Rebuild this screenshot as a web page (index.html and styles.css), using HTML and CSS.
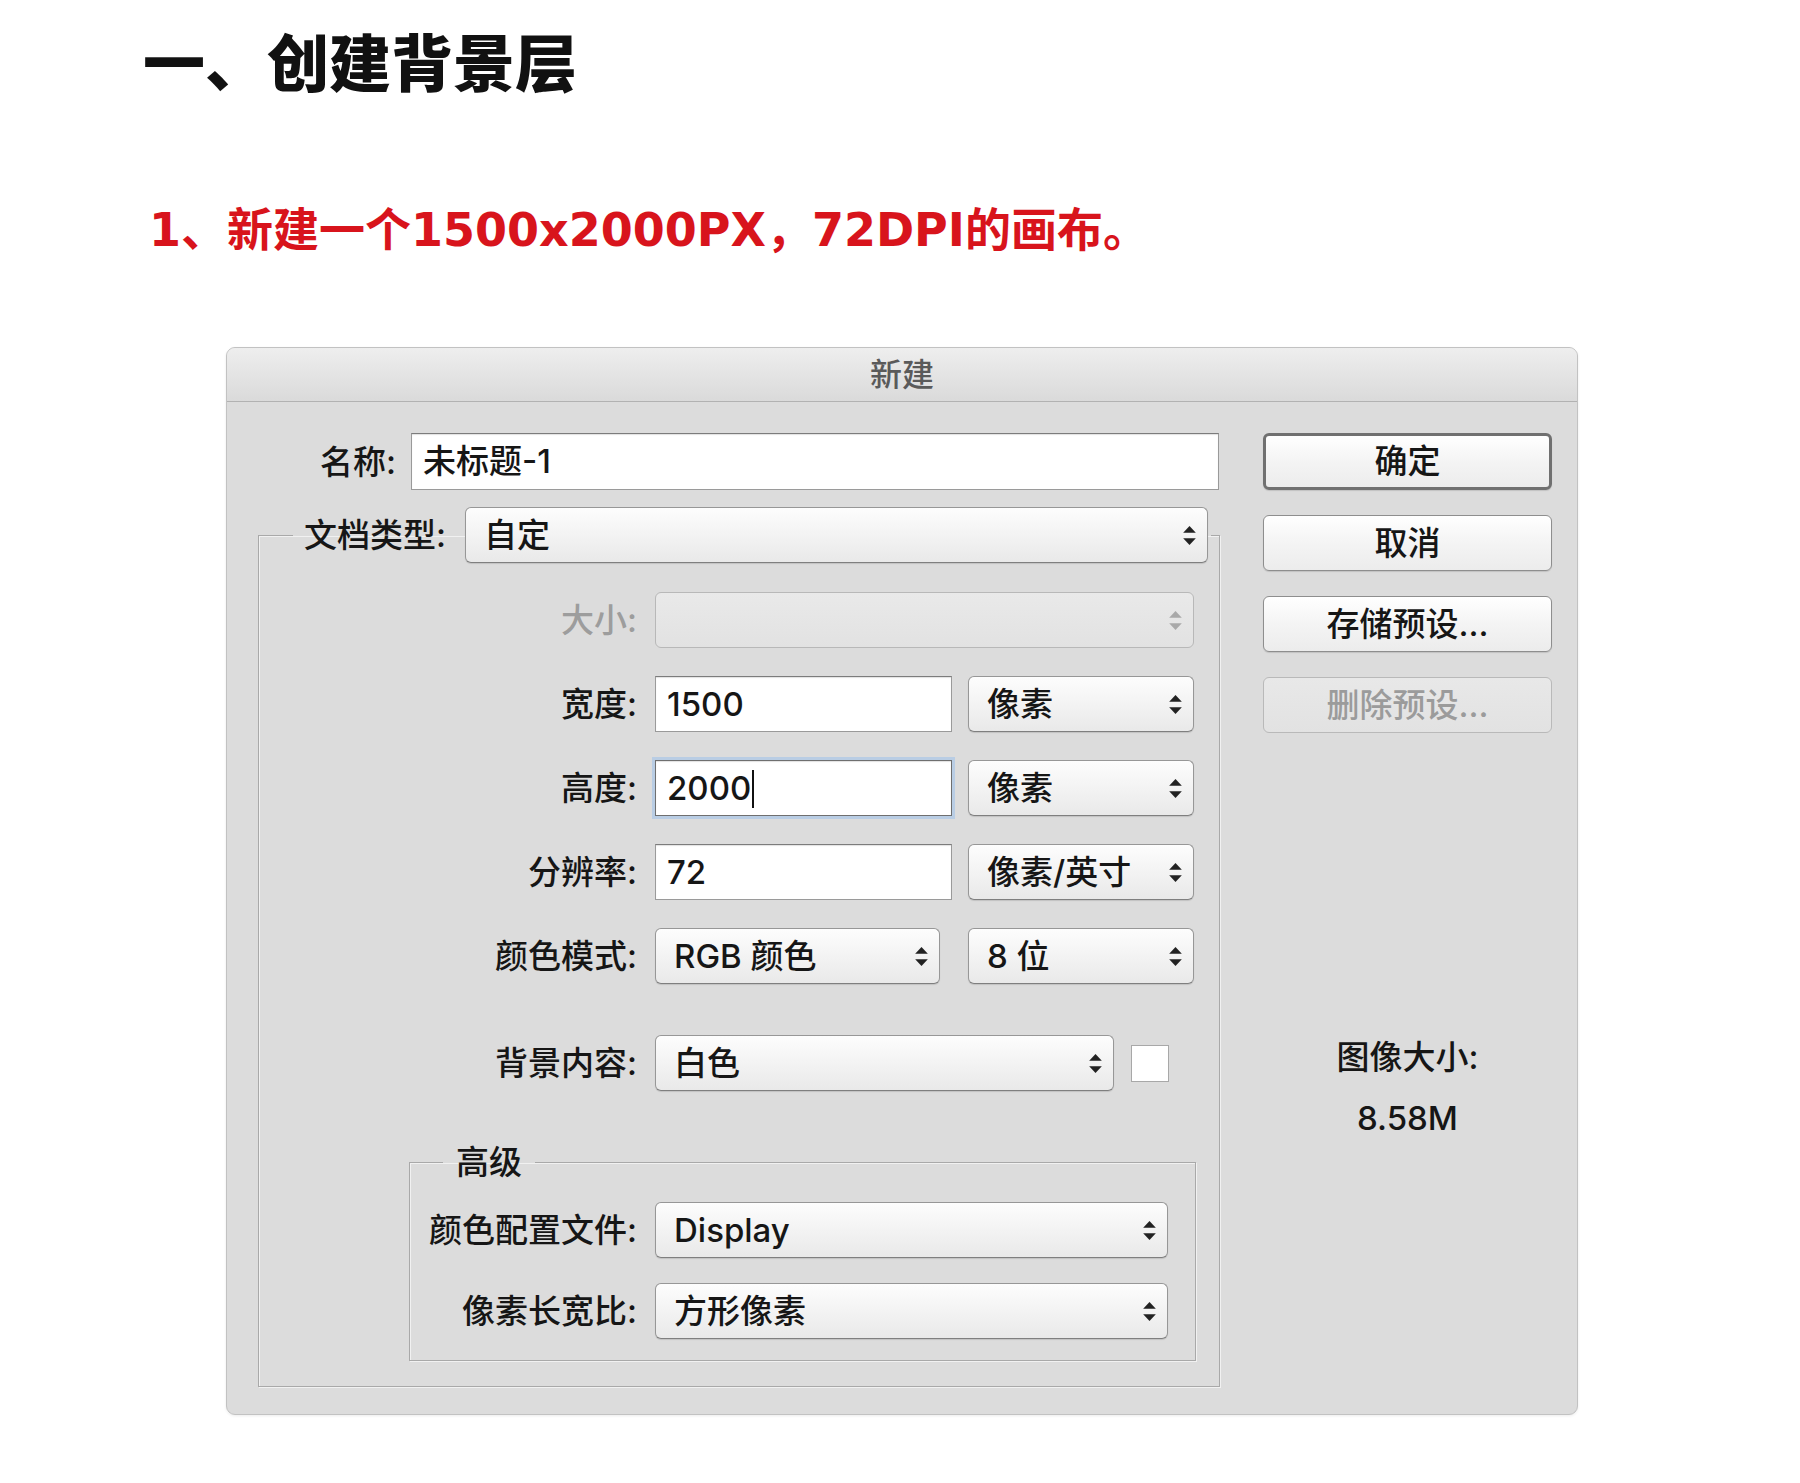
FILE: index.html
```html
<!DOCTYPE html>
<html lang="zh-CN">
<head>
<meta charset="utf-8">
<title>一、创建背景层</title>
<link rel="stylesheet" href="styles.css">
</head>
<body>
<div class="page">
  <h1 class="title">一、创建背景层</h1>
  <p class="step">1、新建一个1500x2000PX，72DPI的画布。</p>

  <div class="dialog">
    <div class="titlebar">新建</div>
    <div class="dlg-body">
      <div class="main">
        <div class="name-row">
          <span class="lbl name-lbl">名称:</span>
          <div class="field name-field">未标题-1</div>
        </div>

        <fieldset class="group doc-group">
          <legend class="doc-legend">
            <span class="lbl doc-lbl">文档类型:</span>
            <div class="select doc-select"><span class="sel-text">自定</span><svg class="arrows" viewBox="0 0 12 18"><polygon points="0,6.5 6,0 12,6.5"/><polygon points="0,11.5 12,11.5 6,18"/></svg></div>
          </legend>

          <div class="row first">
            <span class="lbl outer-lbl disabled">大小:</span>
            <div class="select is-disabled w-size"><span class="sel-text"></span><svg class="arrows" viewBox="0 0 12 18"><polygon points="0,6.5 6,0 12,6.5"/><polygon points="0,11.5 12,11.5 6,18"/></svg></div>
          </div>

          <div class="row">
            <span class="lbl outer-lbl">宽度:</span>
            <div class="field num-field">1500</div>
            <div class="select unit-select"><span class="sel-text">像素</span><svg class="arrows" viewBox="0 0 12 18"><polygon points="0,6.5 6,0 12,6.5"/><polygon points="0,11.5 12,11.5 6,18"/></svg></div>
          </div>

          <div class="row">
            <span class="lbl outer-lbl">高度:</span>
            <div class="field num-field is-focused">2000<span class="caret"></span></div>
            <div class="select unit-select"><span class="sel-text">像素</span><svg class="arrows" viewBox="0 0 12 18"><polygon points="0,6.5 6,0 12,6.5"/><polygon points="0,11.5 12,11.5 6,18"/></svg></div>
          </div>

          <div class="row">
            <span class="lbl outer-lbl">分辨率:</span>
            <div class="field num-field">72</div>
            <div class="select unit-select"><span class="sel-text">像素/英寸</span><svg class="arrows" viewBox="0 0 12 18"><polygon points="0,6.5 6,0 12,6.5"/><polygon points="0,11.5 12,11.5 6,18"/></svg></div>
          </div>

          <div class="row">
            <span class="lbl outer-lbl">颜色模式:</span>
            <div class="select mode-select"><span class="sel-text">RGB 颜色</span><svg class="arrows" viewBox="0 0 12 18"><polygon points="0,6.5 6,0 12,6.5"/><polygon points="0,11.5 12,11.5 6,18"/></svg></div>
            <div class="select unit-select"><span class="sel-text">8 位</span><svg class="arrows" viewBox="0 0 12 18"><polygon points="0,6.5 6,0 12,6.5"/><polygon points="0,11.5 12,11.5 6,18"/></svg></div>
          </div>

          <div class="row bg-row">
            <span class="lbl outer-lbl">背景内容:</span>
            <div class="select bg-select"><span class="sel-text">白色</span><svg class="arrows" viewBox="0 0 12 18"><polygon points="0,6.5 6,0 12,6.5"/><polygon points="0,11.5 12,11.5 6,18"/></svg></div>
            <div class="swatch"></div>
          </div>

          <fieldset class="group adv-group">
            <legend class="adv-legend">高级</legend>
            <div class="row adv-first">
              <span class="lbl inner-lbl">颜色配置文件:</span>
              <div class="select adv-select"><span class="sel-text">Display</span><svg class="arrows" viewBox="0 0 12 18"><polygon points="0,6.5 6,0 12,6.5"/><polygon points="0,11.5 12,11.5 6,18"/></svg></div>
            </div>
            <div class="row adv-second">
              <span class="lbl inner-lbl">像素长宽比:</span>
              <div class="select adv-select"><span class="sel-text">方形像素</span><svg class="arrows" viewBox="0 0 12 18"><polygon points="0,6.5 6,0 12,6.5"/><polygon points="0,11.5 12,11.5 6,18"/></svg></div>
            </div>
          </fieldset>
        </fieldset>
      </div>

      <div class="side">
        <div class="btn btn-default">确定</div>
        <div class="btn">取消</div>
        <div class="btn">存储预设...</div>
        <div class="btn btn-disabled">删除预设...</div>
        <div class="info">
          <div class="info-label">图像大小:</div>
          <div class="info-value">8.58M</div>
        </div>
      </div>
    </div>
  </div>
</div>
</body>
</html>
```

FILE: styles.css
```css
html, body {
  margin: 0;
  padding: 0;
  background: #ffffff;
}

.page {
  padding: 23px 0 60px 143px;
}

.title {
  margin: 0;
  font-family: "Noto Sans CJK SC", sans-serif;
  font-weight: 900;
  font-size: 62px;
  line-height: 74px;
  color: #111111;
}

.step {
  margin: 105px 0 0 6px;
  font-family: "DejaVu Sans", "Noto Sans CJK SC", sans-serif;
  font-weight: 700;
  font-size: 46px;
  line-height: 56px;
  color: #d8141c;
}

/* dialog */
.dialog {
  margin: 89px 0 0 83px;
  width: 1350px;
  background: #dcdcdc;
  border: 1px solid #c2c2c2;
  border-radius: 9px;
  box-shadow: 0 1px 3px rgba(0, 0, 0, 0.08);
  overflow: hidden;
  font-family: "Inter", "Noto Sans CJK SC", sans-serif;
  font-weight: 500;
  font-size: 33px;
  color: #161616;
}

.titlebar {
  height: 53px;
  line-height: 53px;
  text-align: center;
  background: linear-gradient(#eeeeee, #dadada);
  border-bottom: 1px solid #b2b2b2;
  color: #5a5a5a;
  font-size: 32px;
}

.dlg-body {
  display: flex;
  padding: 31px 0 27px 31px;
}

.main {
  width: 962px;
}

.side {
  width: 289px;
  margin-left: 43px;
  display: flex;
  flex-direction: column;
}

/* labels */
.lbl {
  flex: none;
  text-align: right;
  white-space: nowrap;
  line-height: 56px;
}

.lbl.disabled {
  color: #9d9d9d;
}

.name-row {
  display: flex;
  align-items: center;
}

.name-lbl {
  width: 138px;
  margin-right: 15px;
}

.outer-lbl {
  width: 378px;
  margin-right: 18px;
}

.inner-lbl {
  width: 227px;
  margin-right: 18px;
}

/* text fields */
.field {
  box-sizing: border-box;
  height: 56px;
  line-height: 54px;
  padding: 0 11px;
  background: #ffffff;
  border: 1px solid #9a9a9a;
  border-top-color: #7c7c7c;
  box-shadow: inset 0 1px 1px rgba(0, 0, 0, 0.12);
  white-space: nowrap;
}

.name-field {
  width: 808px;
  height: 57px;
}

.num-field {
  width: 297px;
  margin-right: 16px;
}

.num-field.is-focused {
  border-color: #6f6f6f;
  box-shadow: 0 0 0 3px #b9cde4, inset 0 1px 1px rgba(0, 0, 0, 0.12);
}

.caret {
  display: inline-block;
  width: 2px;
  height: 38px;
  margin-left: 1px;
  vertical-align: -8px;
  background: #111111;
}

/* select (popup) buttons */
.select {
  box-sizing: border-box;
  height: 56px;
  display: flex;
  align-items: center;
  padding: 0 11px 0 18px;
  background: linear-gradient(#fdfdfd, #f3f3f3 50%, #e9e9e9);
  border: 1px solid #979797;
  border-bottom-color: #7f7f7f;
  border-radius: 6px;
  box-shadow: 0 1px 1px rgba(0, 0, 0, 0.12);
  white-space: nowrap;
}

.sel-text {
  flex: 1;
  line-height: 54px;
}

.arrows {
  flex: none;
  width: 13px;
  height: 19px;
  fill: #222222;
}

.select.is-disabled {
  background: linear-gradient(#e9e9e9, #e2e2e2);
  border-color: #b8b8b8;
  box-shadow: none;
}

.select.is-disabled .arrows {
  fill: #a9a9a9;
}

.w-size { width: 539px; }
.unit-select { width: 226px; }
.mode-select { width: 285px; margin-right: 28px; }
.bg-select { width: 459px; margin-right: 17px; }
.adv-select { width: 513px; }

.doc-select {
  width: 743px;
}

.swatch {
  width: 38px;
  height: 37px;
  box-sizing: border-box;
  background: #ffffff;
  border: 1px solid #a8a8a8;
}

/* group boxes */
.group {
  margin: 0;
  min-width: 0;
  border: 1px solid #a9a9a9;
  box-shadow: 1px 1px 0 #f1f1f1, inset 1px 1px 0 #f1f1f1;
}

.doc-group {
  margin-top: 17px;
  padding: 0 0 25px 0;
}

.doc-legend {
  display: flex;
  align-items: center;
  margin-left: 34px;
  padding: 0 3px 0 11px;
}

.doc-lbl {
  width: 144px;
  margin-right: 17px;
  text-align: left;
}

.row {
  display: flex;
  align-items: center;
  height: 56px;
  margin-top: 28px;
}

.row.first {
  margin-top: 29px;
}

.row.bg-row {
  margin-top: 51px;
}

.adv-group {
  margin: 51px 0 0 150px;
  width: 787px;
  box-sizing: border-box;
  padding: 0 0 21px 0;
}

.adv-legend {
  margin-left: 33px;
  padding: 0 13px;
  line-height: 40px;
}

.row.adv-first {
  margin-top: 20px;
}

.row.adv-second {
  margin-top: 25px;
}

/* buttons */
.btn {
  box-sizing: border-box;
  height: 56px;
  line-height: 54px;
  text-align: center;
  background: linear-gradient(#ffffff, #f4f4f4 50%, #ececec);
  border: 1px solid #8e8e8e;
  border-radius: 6px;
  box-shadow: 0 1px 1px rgba(0, 0, 0, 0.12);
  margin-top: 25px;
  white-space: nowrap;
}

.btn-default {
  margin-top: 0;
  height: 57px;
  line-height: 51px;
  border: 3px solid #707070;
}

.btn-disabled {
  color: #9b9b9b;
  background: linear-gradient(#e8e8e8, #e2e2e2);
  border-color: #b9b9b9;
  box-shadow: none;
}

.info {
  margin-top: 304px;
  text-align: center;
}

.info-label {
  line-height: 40px;
}

.info-value {
  margin-top: 21px;
  line-height: 40px;
}
```
